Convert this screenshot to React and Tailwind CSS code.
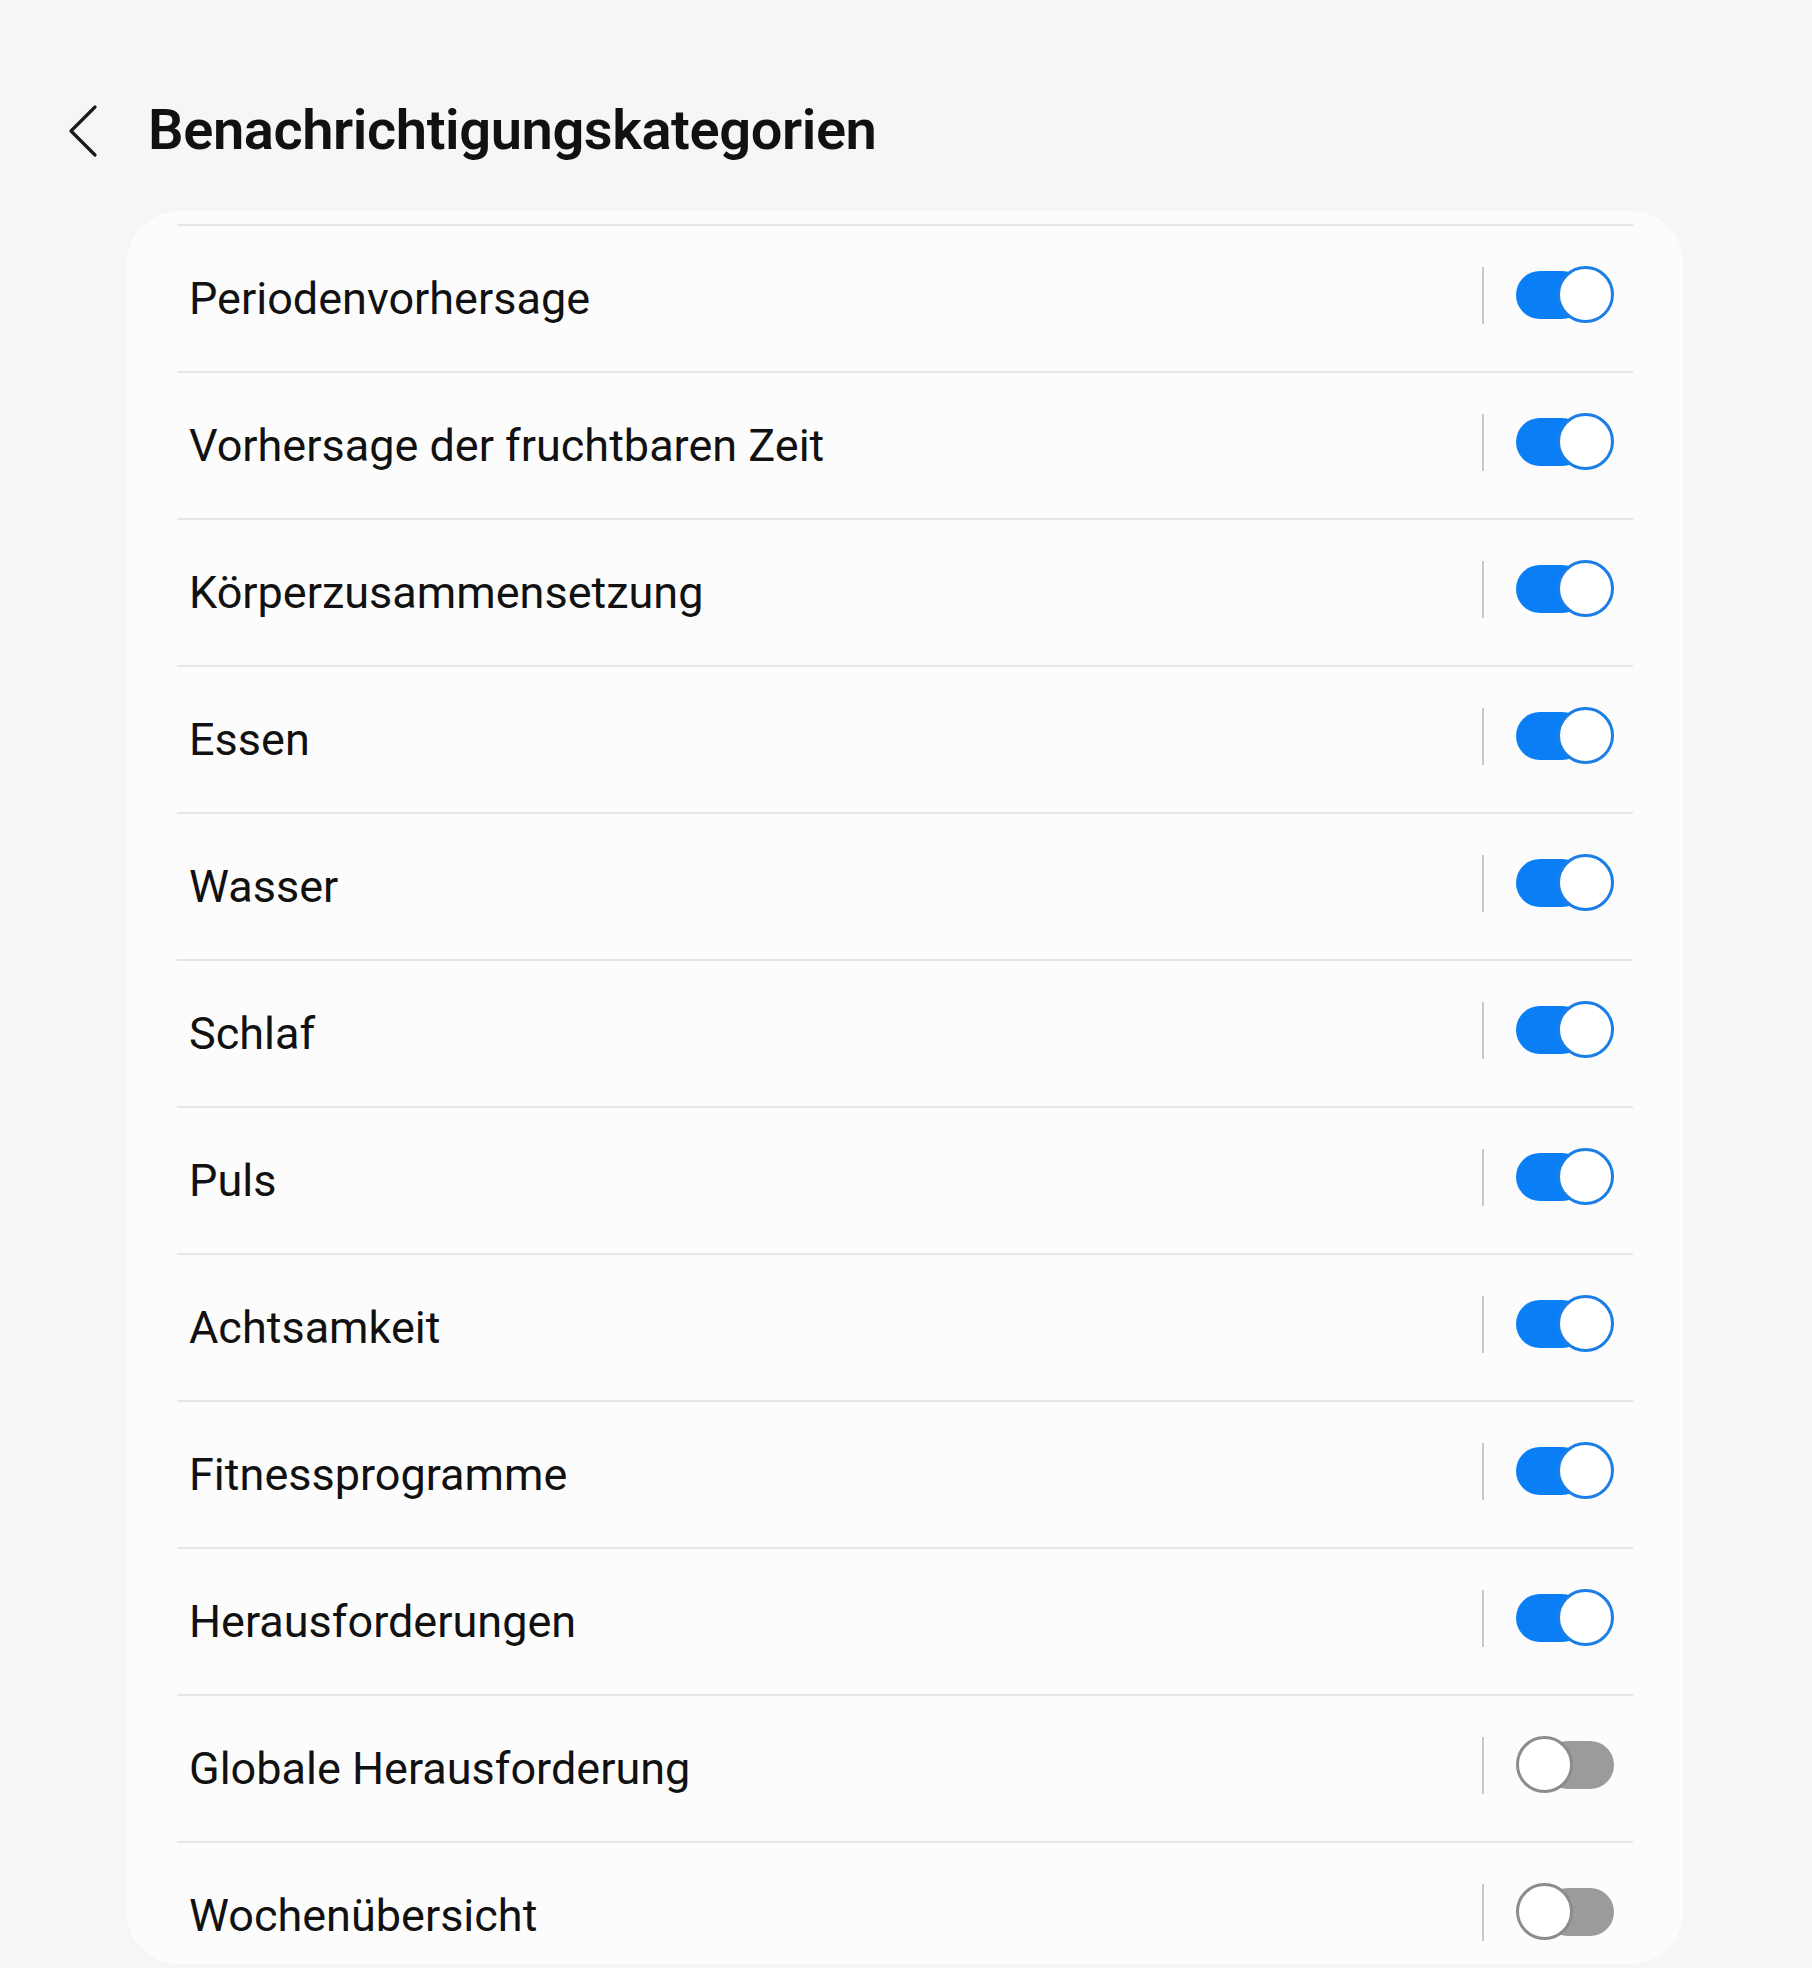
const items = [
  { label: 'Periodenvorhersage', on: true },
  { label: 'Vorhersage der fruchtbaren Zeit', on: true },
  { label: 'Körperzusammensetzung', on: true },
  { label: 'Essen', on: true },
  { label: 'Wasser', on: true },
  { label: 'Schlaf', on: true },
  { label: 'Puls', on: true },
  { label: 'Achtsamkeit', on: true },
  { label: 'Fitnessprogramme', on: true },
  { label: 'Herausforderungen', on: true },
  { label: 'Globale Herausforderung', on: false },
  { label: 'Wochenübersicht', on: false },
]

function Toggle({ on }) {
  if (on) {
    return (
      <div className="relative w-[98px] h-[58px] flex items-center">
        <div className="w-[70px] h-[48px] rounded-full bg-[#0a7ff5]" />
        <div className="absolute right-0 top-0 w-[57px] h-[57px] rounded-full bg-white border-[3px] border-[#1a7ee6]" />
      </div>
    )
  }
  return (
    <div className="relative w-[98px] h-[58px] flex items-center justify-end">
      <div className="w-[70px] h-[48px] rounded-full bg-[#9b9b9b]" />
      <div className="absolute left-0 top-0 w-[57px] h-[57px] rounded-full bg-white border-[3px] border-[#8c8c8c]" />
    </div>
  )
}

export default function App() {
  return (
    <div className="min-h-[1968px] bg-[#f6f6f6] font-['Roboto',sans-serif] text-[#111]">
      {/* Header */}
      <div className="h-[211px] flex items-start pt-[98px] pl-[66px]">
        <svg width="34" height="54" viewBox="0 0 34 54" fill="none" className="mt-[6px]">
          <path d="M29 3 L5 27 L29 51" stroke="#1a1a1a" strokeWidth="3.2" strokeLinecap="round" strokeLinejoin="round" />
        </svg>
        <h1 className="ml-[48px] text-[56px] leading-[64px] font-semibold tracking-[-0.4px]">
          Benachrichtigungskategorien
        </h1>
      </div>

      {/* Card */}
      <div className="ml-[127px] w-[1556px] h-[1753px] rounded-[52px] bg-[#fcfcfc] overflow-hidden pt-[13px] px-[50px]">
        {items.map((it) => (
          <div
            key={it.label}
            className="h-[147px] border-t-[2px] border-[#e6e6e6] flex items-center pl-[12px] pr-[19px]"
          >
            <span className="flex-1 text-[45px] leading-none">{it.label}</span>
            <div className="flex items-center mb-[7px]">
              <div className="w-[2px] h-[57px] bg-[#c9c9c9] mr-[32px]" />
              <Toggle on={it.on} />
            </div>
          </div>
        ))}
      </div>
    </div>
  )
}
